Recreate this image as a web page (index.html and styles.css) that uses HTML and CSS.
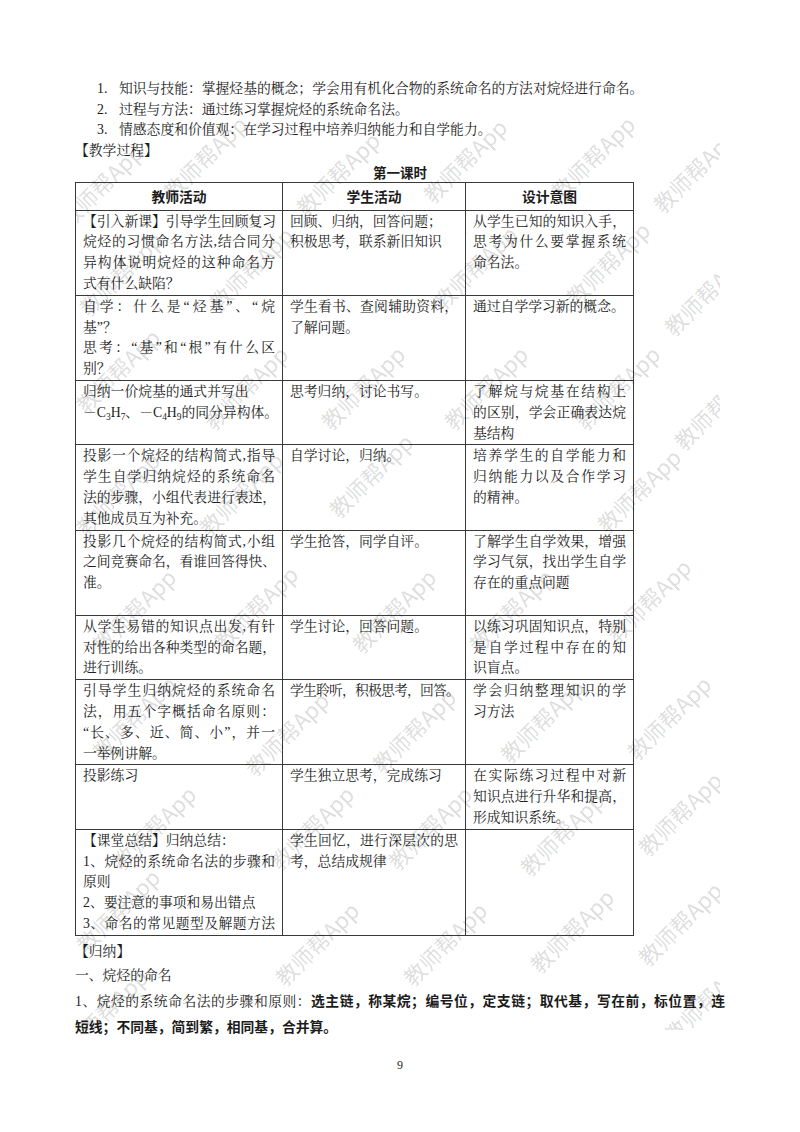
FILE: index.html
```html
<!DOCTYPE html>
<html lang="zh-CN">
<head>
<meta charset="utf-8">
<title>烷烃的命名</title>
<link rel="stylesheet" href="styles.css">
</head>
<body>
<div class="page">
  <div class="goals">
    <p><span class="num">1.</span>知识与技能：掌握烃基的概念；学会用有机化合物的系统命名的方法对烷烃进行命名。</p>
    <p><span class="num">2.</span>过程与方法：通过练习掌握烷烃的系统命名法。</p>
    <p><span class="num">3.</span>情感态度和价值观：在学习过程中培养归纳能力和自学能力。</p>
  </div>
  <p class="section">【教学过程】</p>
  <p class="caption">第一课时</p>
  <table class="plan">
    <colgroup><col class="c1"><col class="c2"><col class="c3"></colgroup>
    <thead>
      <tr><th>教师活动</th><th>学生活动</th><th>设计意图</th></tr>
    </thead>
    <tbody>
      <tr>
        <td><span class="j">【引入新课】引导学生回顾复习</span><span class="j">烷烃的习惯命名方法,结合同分</span><span class="j">异构体说明烷烃的这种命名方</span><span class="e">式有什么缺陷？</span></td>
        <td><span class="e">回顾、归纳，回答问题；</span><span class="e">积极思考，联系新旧知识</span></td>
        <td><span class="j">从学生已知的知识入手，</span><span class="j">思考为什么要掌握系统</span><span class="e">命名法。</span></td>
      </tr>
      <tr>
        <td><span class="j">自学：什么是“烃基”、“烷</span><span class="e">基”？</span><span class="j">思考：“基”和“根”有什么区</span><span class="e">别？</span></td>
        <td><span class="j">学生看书、查阅辅助资料，</span><span class="e">了解问题。</span></td>
        <td><span class="e">通过自学学习新的概念。</span></td>
      </tr>
      <tr>
        <td><span class="e">归纳一价烷基的通式并写出</span><span class="j">－C<sub>3</sub>H<sub>7</sub>、－C<sub>4</sub>H<sub>9</sub>的同分异构体。</span></td>
        <td><span class="e">思考归纳，讨论书写。</span></td>
        <td><span class="j">了解烷与烷基在结构上</span><span class="j">的区别，学会正确表达烷</span><span class="e">基结构</span></td>
      </tr>
      <tr>
        <td><span class="j">投影一个烷烃的结构简式,指导</span><span class="j">学生自学归纳烷烃的系统命名</span><span class="j">法的步骤，小组代表进行表述，</span><span class="e">其他成员互为补充。</span></td>
        <td><span class="e">自学讨论，归纳。</span></td>
        <td><span class="j">培养学生的自学能力和</span><span class="j">归纳能力以及合作学习</span><span class="e">的精神。</span></td>
      </tr>
      <tr>
        <td><span class="j">投影几个烷烃的结构简式,小组</span><span class="j">之间竞赛命名，看谁回答得快、</span><span class="e">准。</span><span class="e">&nbsp;</span></td>
        <td><span class="e">学生抢答，同学自评。</span></td>
        <td><span class="j">了解学生自学效果，增强</span><span class="j">学习气氛，找出学生自学</span><span class="e">存在的重点问题</span></td>
      </tr>
      <tr>
        <td><span class="j">从学生易错的知识点出发,有针</span><span class="j">对性的给出各种类型的命名题，</span><span class="e">进行训练。</span></td>
        <td><span class="e">学生讨论，回答问题。</span></td>
        <td><span class="j">以练习巩固知识点，特别</span><span class="j">是自学过程中存在的知</span><span class="e">识盲点。</span></td>
      </tr>
      <tr>
        <td><span class="j">引导学生归纳烷烃的系统命名</span><span class="j">法，用五个字概括命名原则：</span><span class="j">“长、多、近、简、小”，并一</span><span class="e">一举例讲解。</span></td>
        <td><span class="e tight">学生聆听，积极思考，回答。</span></td>
        <td><span class="j">学会归纳整理知识的学</span><span class="e">习方法</span></td>
      </tr>
      <tr>
        <td><span class="e">投影练习</span></td>
        <td><span class="e">学生独立思考，完成练习</span></td>
        <td><span class="j">在实际练习过程中对新</span><span class="j">知识点进行升华和提高，</span><span class="e">形成知识系统。</span></td>
      </tr>
      <tr>
        <td><span class="e">【课堂总结】归纳总结：</span><span class="j">1、烷烃的系统命名法的步骤和</span><span class="e">原则</span><span class="e">2、要注意的事项和易出错点</span><span class="j">3、命名的常见题型及解题方法</span></td>
        <td><span class="j">学生回忆，进行深层次的思</span><span class="e">考，总结成规律</span></td>
        <td></td>
      </tr>
    </tbody>
  </table>
  <div class="summary">
    <p>【归纳】</p>
    <p>一、烷烃的命名</p>
    <p><span class="j">1、烷烃的系统命名法的步骤和原则：<b>选主链，称某烷；编号位，定支链；取代基，写在前，标位置，连</b></span><span class="e"><b>短线；不同基，简到繁，相同基，合并算。</b></span></p>
  </div>
  <p class="pnum">9</p>

  <div class="wm" aria-hidden="true">
    <span style="left:129px;top:62px">教师帮App</span>
    <span style="left:262px;top:78px">教师帮App</span>
    <span style="left:389px;top:65px">教师帮App</span>
    <span style="left:517px;top:62px">教师帮App</span>
    <span style="left:619px;top:75px">教师帮App</span>
    <span style="left:25px;top:90px">教师帮App</span>
    <span style="left:45px;top:178px">教师帮App</span>
    <span style="left:175px;top:173px">教师帮App</span>
    <span style="left:399px;top:172px">教师帮App</span>
    <span style="left:532px;top:168px">教师帮App</span>
    <span style="left:630px;top:198px">教师帮App</span>
    <span style="left:42px;top:275px">教师帮App</span>
    <span style="left:170px;top:292px">教师帮App</span>
    <span style="left:287px;top:292px">教师帮App</span>
    <span style="left:410px;top:292px">教师帮App</span>
    <span style="left:542px;top:292px">教师帮App</span>
    <span style="left:640px;top:312px">教师帮App</span>
    <span style="left:42px;top:398px">教师帮App</span>
    <span style="left:165px;top:398px">教师帮App</span>
    <span style="left:295px;top:380px">教师帮App</span>
    <span style="left:563px;top:395px">教师帮App</span>
    <span style="left:58px;top:515px">教师帮App</span>
    <span style="left:180px;top:512px">教师帮App</span>
    <span style="left:318px;top:515px">教师帮App</span>
    <span style="left:435px;top:515px">教师帮App</span>
    <span style="left:573px;top:505px">教师帮App</span>
    <span style="left:58px;top:622px">教师帮App</span>
    <span style="left:211px;top:638px">教师帮App</span>
    <span style="left:338px;top:635px">教师帮App</span>
    <span style="left:466px;top:625px">教师帮App</span>
    <span style="left:593px;top:622px">教师帮App</span>
    <span style="left:78px;top:732px">教师帮App</span>
    <span style="left:236px;top:732px">教师帮App</span>
    <span style="left:354px;top:732px">教师帮App</span>
    <span style="left:486px;top:738px">教师帮App</span>
    <span style="left:604px;top:718px">教师帮App</span>
    <span style="left:42px;top:815px">教师帮App</span>
    <span style="left:241px;top:848px">教师帮App</span>
    <span style="left:369px;top:848px">教师帮App</span>
    <span style="left:496px;top:835px">教师帮App</span>
    <span style="left:604px;top:828px">教师帮App</span>
    <span style="left:30px;top:915px">教师帮App</span>
    <span style="left:630px;top:905px">教师帮App</span>
  </div>
</div>
</body>
</html>
```
FILE: styles.css
```css
html, body {
  margin: 0;
  padding: 0;
  background: #ffffff;
}

body {
  color: #1c1c1c;
  font-family: "Liberation Serif", "Noto Serif CJK SC", "Noto Sans CJK SC", serif;
  font-size: 13.8px;
}

.page {
  position: relative;
  width: 800px;
  height: 1132px;
  box-sizing: border-box;
  padding: 79px 75px 0 75px;
  overflow: hidden;
}

.goals p {
  margin: 0;
  line-height: 20.7px;
  text-indent: 22px;
  white-space: nowrap;
}

.num {
  display: inline-block;
  width: 22px;
  text-indent: 0;
}

.section {
  margin: 0;
  line-height: 20.7px;
}

.caption {
  margin: 0;
  line-height: 20px;
  text-align: center;
  font-weight: 700;
  font-family: "Noto Sans CJK SC", sans-serif;
  font-size: 13.5px;
}

.plan {
  border-collapse: collapse;
  table-layout: fixed;
  width: 558px;
}

.plan .c1 { width: 207px; }
.plan .c2 { width: 183px; }
.plan .c3 { width: 168px; }

.plan th,
.plan td {
  border: 1px solid #3a3a3a;
  line-height: 20.8px;
  vertical-align: top;
  overflow: visible;
}

.plan th {
  padding: 3px 7px;
  text-align: center;
  vertical-align: middle;
  font-weight: 700;
  font-family: "Noto Sans CJK SC", sans-serif;
  font-size: 13.8px;
}

.plan td {
  padding: 1px 7px 0 7px;
}

.j {
  display: block;
  white-space: nowrap;
  text-align: justify;
  text-align-last: justify;
}

.e {
  display: block;
  white-space: nowrap;
}

.tight {
  letter-spacing: -0.8px;
}

sub {
  font-size: 0.68em;
  line-height: 0;
  vertical-align: -0.28em;
}

.summary {
  margin-top: 4px;
}

.summary p {
  margin: 0;
  line-height: 24px;
}

.summary b {
  font-weight: 700;
  font-family: "Noto Sans CJK SC", sans-serif;
}

.pnum {
  margin: 15px 0 0 0;
  line-height: 20px;
  text-align: center;
  font-size: 12px;
  color: #222222;
}

.wm {
  position: absolute;
  left: 75px;
  top: 95px;
  width: 645px;
  height: 935px;
  overflow: hidden;
  pointer-events: none;
}

.wm span {
  position: absolute;
  transform: translate(-50%, -50%) rotate(-45deg);
  font-family: "Noto Sans CJK SC", sans-serif;
  font-size: 22px;
  line-height: 1;
  color: rgba(0, 0, 0, 0.15);
  white-space: nowrap;
}
```
